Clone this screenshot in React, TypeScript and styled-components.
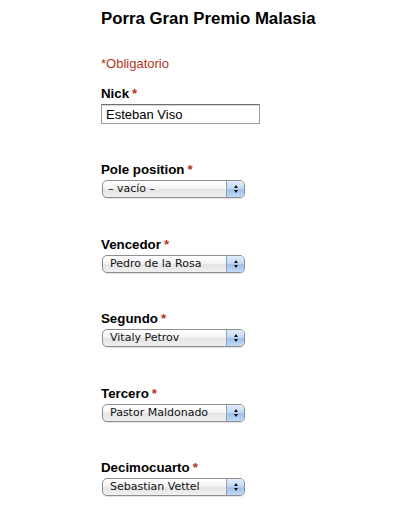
import React from "react";
import styled, { createGlobalStyle } from "styled-components";

const Global = createGlobalStyle`
  html, body { margin: 0; padding: 0; background: #fff; }
  body { font-family: "Liberation Sans", Arial, sans-serif; color: #000; }
`;

const Page = styled.div`
  padding: 9px 0 0 101px;
  width: 311px;
`;

const Title = styled.h1`
  margin: 0;
  font-size: 16.8px;
  font-weight: bold;
  line-height: 20px;
`;

const RequiredNote = styled.div`
  margin-top: 27px;
  font-size: 13px;
  line-height: 16px;
  color: #b3361c;
`;

const Field = styled.div<{ $height: number }>`
  height: ${(p) => p.$height}px;
  display: flex;
  flex-direction: column;
`;

const Label = styled.div`
  font-size: 13.3px;
  font-weight: bold;
  line-height: 16px;
  margin-bottom: 2px;
`;

const Star = styled.span`
  color: #b3361c;
  margin-left: 3px;
`;

const TextInput = styled.div`
  width: 153px;
  height: 18px;
  border: 1px solid #9e9e9e;
  border-top-color: #6f6f6f;
  box-shadow: inset 0 1px 0 #d8d8d8;
  padding: 0 0 0 4px;
  font-size: 13px;
  line-height: 19px;
  box-sizing: content-box;
`;

const Select = styled.div`
  margin-left: 1px;
  width: 141px;
  height: 16px;
  border: 1px solid #8e8e8e;
  border-radius: 5px;
  background: linear-gradient(#ffffff 0%, #f4f4f4 45%, #e4e4e4 55%, #f0f0f0 100%);
  box-shadow: 0 1px 1px rgba(0, 0, 0, 0.12);
  display: flex;
  align-items: center;
  overflow: hidden;
`;

const SelectText = styled.span<{ $indent: number }>`
  flex: 1;
  padding-left: ${(p) => p.$indent}px;
  font-family: "DejaVu Sans", "Liberation Sans", sans-serif;
  font-size: 11px;
  line-height: 16px;
  color: #111;
  white-space: nowrap;
`;

const Stepper = styled.span`
  width: 17px;
  height: 16px;
  border-left: 1px solid #8aa3c4;
  background: linear-gradient(#e2edfa 0%, #c5daf3 45%, #9fc0ea 55%, #c3dcf8 100%);
  display: flex;
  flex-direction: column;
  align-items: center;
  justify-content: center;
  gap: 2px;
`;

const Tri = styled.span<{ $up?: boolean }>`
  width: 0;
  height: 0;
  border-left: 2.5px solid transparent;
  border-right: 2.5px solid transparent;
  ${(p) =>
    p.$up ? "border-bottom: 3px solid #111;" : "border-top: 3px solid #111;"}
`;

const Form = styled.div`
  margin-top: 14px;
`;

const selects = [
  { label: "Pole position", value: "– vacío –", indent: 5 },
  { label: "Vencedor", value: "Pedro de la Rosa", indent: 7 },
  { label: "Segundo", value: "Vitaly Petrov", indent: 7 },
  { label: "Tercero", value: "Pastor Maldonado", indent: 7 },
  { label: "Decimocuarto", value: "Sebastian Vettel", indent: 7 },
];

export default function App() {
  return (
    <>
      <Global />
      <Page>
        <Title>Porra Gran Premio Malasia</Title>
        <RequiredNote>*Obligatorio</RequiredNote>
        <Form>
          <Field $height={76}>
            <Label>
              Nick<Star>*</Star>
            </Label>
            <TextInput>Esteban Viso</TextInput>
          </Field>
          {selects.map((s) => (
            <Field key={s.label} $height={74.5}>
              <Label>
                {s.label}
                <Star>*</Star>
              </Label>
              <Select>
                <SelectText $indent={s.indent}>{s.value}</SelectText>
                <Stepper>
                  <Tri $up />
                  <Tri />
                </Stepper>
              </Select>
            </Field>
          ))}
        </Form>
      </Page>
    </>
  );
}
